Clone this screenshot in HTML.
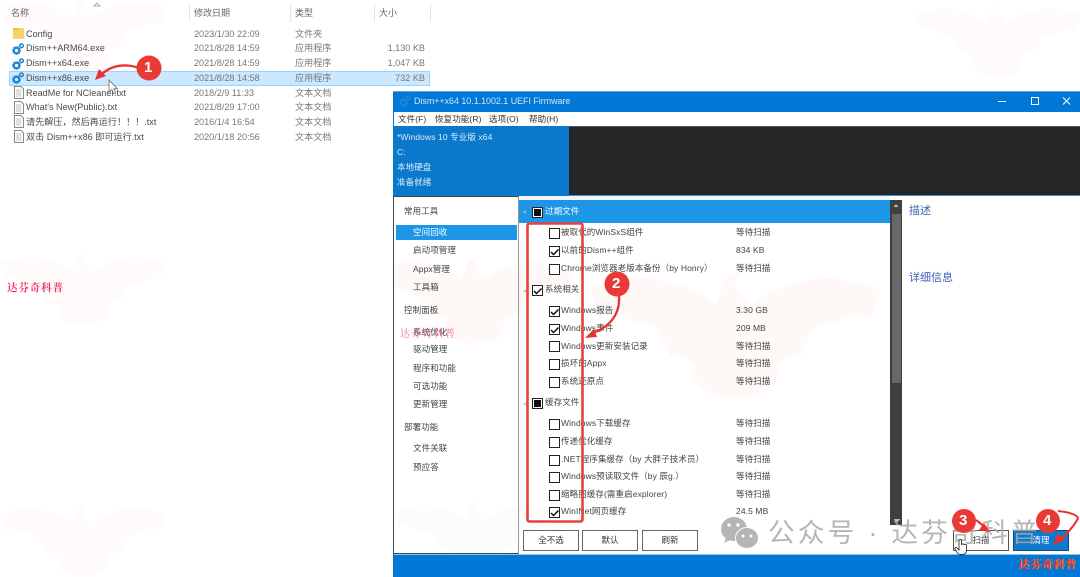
<!DOCTYPE html>
<html lang="zh"><head><meta charset="utf-8"><title>Dism++</title>
<style>
html,body{margin:0;padding:0;background:#fff}
#p{position:relative;width:1080px;height:577px;overflow:hidden;background:#fff;font-family:"Liberation Sans","Noto Sans CJK SC",sans-serif;color:#333;font-size:9px}
#p div,#p span.t{position:absolute}
.t{white-space:nowrap;line-height:14px;height:14px}
.f{color:#4a4a4a;font-size:9.1px}
.g{color:#777;font-size:9.1px}
.w{color:#fff;font-size:8.5px;letter-spacing:.1px}
.s{color:#444;font-size:8.5px;letter-spacing:.1px}
.c{width:9px;height:9px;border:1.4px solid #222;background:#fff}
.b{background:#fff;border:1px solid #666;height:19px;width:54px;line-height:19px;text-align:center;color:#333;font-size:8.5px;box-sizing:content-box}
svg{position:absolute;left:0;top:0}
</style></head><body><div id="p">

<svg width="1080" height="577" style="z-index:0">
<defs>
<g id="bat"><path d="M0 11 L28 5 Q52 6 72 20 L76 10 Q78 2 88 1 Q82 4 83 9 Q88 18 92 20 Q112 6 138 5 L166 11 L160 28 Q154 24 150 26 Q146 27 140 31 Q134 30 128 34 Q124 40 120 50 Q114 48 106 55 Q110 62 103 68 Q94 75 84 73 Q72 75 64 68 Q56 62 60 55 Q52 48 46 50 Q42 40 38 34 Q32 30 26 31 Q20 27 14 26 Q10 24 6 28Z"/></g>
<g id="gear"><circle cx="4.5" cy="7.5" r="2.7" fill="none" stroke="#1b86d8" stroke-width="2.2"/><circle cx="4.5" cy="7.5" r="4" fill="none" stroke="#1b86d8" stroke-width="1" stroke-dasharray="1.3 1.2"/><circle cx="9.5" cy="2.8" r="1.8" fill="none" stroke="#1b86d8" stroke-width="1.5"/></g>
<g id="txt"><path d="M1.5 .5H8L10.5 3V12.5H1.5Z" fill="#fff" stroke="#888"/><path d="M3 4H8.5M3 6H8.5M3 8H8.5M3 10H8.5" stroke="#aaa" stroke-width=".8"/></g>
</defs>
<g fill="#fefbfa">
<use href="#bat" x="0" y="-3"/><use href="#bat" x="0" y="252"/><use href="#bat" x="0" y="503"/><use href="#bat" x="915" y="3"/>
</g>
<rect x="13" y="28" width="11" height="11" rx="1" fill="#f8d468"/><rect x="13" y="28" width="5" height="2" fill="#e9b93f"/>
<use href="#gear" x="12" y="43"/><use href="#gear" x="12" y="58"/>
</svg>

<span class="t" style="left:11px;top:6px;color:#666;font-size:9px">名称</span>
<span class="t" style="left:194px;top:6px;color:#666;font-size:9px">修改日期</span>
<span class="t" style="left:295px;top:6px;color:#666;font-size:9px">类型</span>
<span class="t" style="left:379px;top:6px;color:#666;font-size:9px">大小</span>
<div style="left:189px;top:4px;width:1px;height:18px;background:#e5e5e5"></div>
<div style="left:290px;top:4px;width:1px;height:18px;background:#e5e5e5"></div>
<div style="left:374px;top:4px;width:1px;height:18px;background:#e5e5e5"></div>
<div style="left:430px;top:4px;width:1px;height:18px;background:#e5e5e5"></div>
<div style="left:9px;top:71px;width:421px;height:15px;background:#cce8ff;border:1px solid #99d1ff;box-sizing:border-box"></div>
<svg width="1080" height="577"><path d="M97 3l3 3h-6z" fill="none" stroke="#999" stroke-width=".8"/><use href="#gear" x="12" y="72"/><use href="#txt" x="13" y="86"/><use href="#txt" x="13" y="101"/><use href="#txt" x="13" y="115"/><use href="#txt" x="13" y="130"/></svg>

<span class="t f" style="left:26px;top:27px">Config</span><span class="t g" style="left:194px;top:27px">2023/1/30 22:09</span><span class="t g" style="left:295px;top:27px">文件夹</span>
<span class="t f" style="left:26px;top:41px">Dism++ARM64.exe</span><span class="t g" style="left:194px;top:41px">2021/8/28 14:59</span><span class="t g" style="left:295px;top:41px">应用程序</span><span class="t g" style="right:655px;top:41px">1,130 KB</span>
<span class="t f" style="left:26px;top:56px">Dism++x64.exe</span><span class="t g" style="left:194px;top:56px">2021/8/28 14:59</span><span class="t g" style="left:295px;top:56px">应用程序</span><span class="t g" style="right:655px;top:56px">1,047 KB</span>
<span class="t f" style="left:26px;top:71px">Dism++x86.exe</span><span class="t g" style="left:194px;top:71px">2021/8/28 14:58</span><span class="t g" style="left:295px;top:71px">应用程序</span><span class="t g" style="right:655px;top:71px">732 KB</span>
<span class="t f" style="left:26px;top:86px">ReadMe for NCleaner.txt</span><span class="t g" style="left:194px;top:86px">2018/2/9 11:33</span><span class="t g" style="left:295px;top:86px">文本文档</span>
<span class="t f" style="left:26px;top:100px">What's New(Public).txt</span><span class="t g" style="left:194px;top:100px">2021/8/29 17:00</span><span class="t g" style="left:295px;top:100px">文本文档</span>
<span class="t f" style="left:26px;top:115px">请先解压，然后再运行！！！.txt</span><span class="t g" style="left:194px;top:115px">2016/1/4 16:54</span><span class="t g" style="left:295px;top:115px">文本文档</span>
<span class="t f" style="left:26px;top:130px">双击 Dism++x86 即可运行.txt</span><span class="t g" style="left:194px;top:130px">2020/1/18 20:56</span><span class="t g" style="left:295px;top:130px">文本文档</span>

<span class="t" style="left:7px;top:281px;color:#f2305f;font-family:'Noto Serif CJK SC',serif;font-size:10.5px;font-weight:700;letter-spacing:.9px">达芬奇科普</span>

<!-- window -->
<div style="left:393px;top:91px;width:687px;height:486px;background:#0078d7"></div>
<div style="left:393px;top:91px;width:687px;height:1px;background:#5aa9e6"></div>
<div style="left:394px;top:112px;width:686px;height:14px;background:#fff"></div>
<div style="left:394px;top:126px;width:175px;height:70px;background:#0a78cb"></div>
<div style="left:569px;top:126px;width:511px;height:70px;background:#252525;border-top:1px solid #555;border-bottom:1px solid #3f8fca;box-sizing:border-box"></div>
<div style="left:394px;top:196px;width:686px;height:358px;background:#fff"></div>

<svg width="686" height="358" viewBox="394 196 686 358" style="left:394px;top:196px;overflow:hidden">
<g fill="#fef8f7">
<g transform="translate(375 255) scale(1.2)"><use href="#bat"/></g>
<g transform="translate(590 269) scale(1.75)"><use href="#bat"/></g>
</g>
<g fill="#fdfcfc"><use href="#bat" x="393" y="500"/></g>
</svg>

<div style="left:393px;top:196px;width:126px;height:358px;border:1px solid #3a4a55;border-right:1.5px solid #999;box-sizing:border-box"></div>
<div style="left:519px;top:196px;width:371px;height:4px;background:#f4f4f4"></div>
<div style="left:519px;top:200px;width:371px;height:23px;background:#1e96e8"></div>
<div style="left:396px;top:225px;width:121px;height:15px;background:#1e96e8"></div>
<div style="left:890px;top:200px;width:12px;height:325px;background:#3f3f42"></div>
<div style="left:891.5px;top:214px;width:9px;height:169px;background:#686868"></div>
<div style="left:394px;top:554px;width:686px;height:1px;background:#8cc4ee"></div>

<svg width="1080" height="577">
<use href="#gear" x="399" y="95"/>
<path d="M998 101.500h8" stroke="#fff" stroke-width="1"/>
<rect x="1031.500" y="97.500" width="7" height="7" fill="none" stroke="#fff"/>
<path d="M1063 97.500l7 7M1070 97.500l-7 7" stroke="#fff"/>
<path d="M523 213l3-3v3z M523 292l3-3v3z M523 405l3-3v3z" fill="#bbb"/>
<path d="M893.500 207l2.500-3 2.500 3z M893.500 519l3.500 3.500 3.500-3.500z" fill="#bbb"/>
</svg>

<span class="t" style="left:414px;top:94px;color:#cfe6f8;font-size:8.9px">Dism++x64 10.1.1002.1 UEFI Firmware</span>
<span class="t s" style="left:398px;top:112px;color:#333">文件(F)</span>
<span class="t s" style="left:435px;top:112px;color:#333">恢复功能(R)</span>
<span class="t s" style="left:489px;top:112px;color:#333">选项(O)</span>
<span class="t s" style="left:529px;top:112px;color:#333">帮助(H)</span>
<span class="t w" style="left:397px;top:130px;color:#d8ecfa">*Windows 10 专业版 x64</span>
<span class="t w" style="left:397px;top:145px;color:#d8ecfa">C:</span>
<span class="t w" style="left:397px;top:160px;color:#d8ecfa">本地硬盘</span>
<span class="t w" style="left:397px;top:175px;color:#d8ecfa">准备就绪</span>

<span class="t s" style="left:404px;top:204px">常用工具</span>
<span class="t w" style="left:413px;top:225px">空间回收</span>
<span class="t s" style="left:413px;top:243px">启动项管理</span>
<span class="t s" style="left:413px;top:262px">Appx管理</span>
<span class="t s" style="left:413px;top:280px">工具箱</span>
<span class="t s" style="left:404px;top:303px">控制面板</span>
<span class="t s" style="left:413px;top:325px">系统优化</span>
<span class="t" style="left:400px;top:326px;color:#f2467a;font-family:'Noto Serif CJK SC',serif;font-size:10px;letter-spacing:1.2px;opacity:.85">达芬奇科普</span>
<span class="t s" style="left:413px;top:342px">驱动管理</span>
<span class="t s" style="left:413px;top:361px">程序和功能</span>
<span class="t s" style="left:413px;top:379px">可选功能</span>
<span class="t s" style="left:413px;top:397px">更新管理</span>
<span class="t s" style="left:404px;top:420px">部署功能</span>
<span class="t s" style="left:413px;top:441px">文件关联</span>
<span class="t s" style="left:413px;top:460px">预应答</span>

<div class="c" style="left:532px;top:206.500px"></div><div style="left:534.400px;top:208.900px;width:7px;height:7px;background:#111"></div>
<span class="t w" style="left:545px;top:204px">过期文件</span>
<div class="c" style="left:549px;top:228px"></div><span class="t s" style="left:561px;top:225px">被取代的WinSxS组件</span><span class="t s" style="left:736px;top:225px">等待扫描</span>
<div class="c" style="left:549px;top:246px"></div><span class="t s" style="left:561px;top:243px">以前的Dism++组件</span><span class="t s" style="left:736px;top:243px">834 KB</span>
<div class="c" style="left:549px;top:264px"></div><span class="t s" style="left:561px;top:261px">Chrome浏览器老版本备份（by Honry）</span><span class="t s" style="left:736px;top:261px">等待扫描</span>
<div class="c" style="left:532px;top:285px"></div><span class="t s" style="left:545px;top:282px">系统相关</span>
<div class="c" style="left:549px;top:306px"></div><span class="t s" style="left:561px;top:303px">Windows报告</span><span class="t s" style="left:736px;top:303px">3.30 GB</span>
<div class="c" style="left:549px;top:324px"></div><span class="t s" style="left:561px;top:321px">Windows事件</span><span class="t s" style="left:736px;top:321px">209 MB</span>
<div class="c" style="left:549px;top:341px"></div><span class="t s" style="left:561px;top:339px">Windows更新安装记录</span><span class="t s" style="left:736px;top:339px">等待扫描</span>
<div class="c" style="left:549px;top:359px"></div><span class="t s" style="left:561px;top:356px">损坏的Appx</span><span class="t s" style="left:736px;top:356px">等待扫描</span>
<div class="c" style="left:549px;top:377px"></div><span class="t s" style="left:561px;top:374px">系统还原点</span><span class="t s" style="left:736px;top:374px">等待扫描</span>
<div class="c" style="left:532px;top:398px"></div><div style="left:534.400px;top:400.400px;width:7px;height:7px;background:#111"></div><span class="t s" style="left:545px;top:395px">缓存文件</span>
<div class="c" style="left:549px;top:419px"></div><span class="t s" style="left:561px;top:416px">Windows下载缓存</span><span class="t s" style="left:736px;top:416px">等待扫描</span>
<div class="c" style="left:549px;top:437px"></div><span class="t s" style="left:561px;top:434px">传递优化缓存</span><span class="t s" style="left:736px;top:434px">等待扫描</span>
<div class="c" style="left:549px;top:455px"></div><span class="t s" style="left:561px;top:452px">.NET程序集缓存（by 大胖子技术员）</span><span class="t s" style="left:736px;top:452px">等待扫描</span>
<div class="c" style="left:549px;top:472px"></div><span class="t s" style="left:561px;top:469px">Windows预读取文件（by 辰g.）</span><span class="t s" style="left:736px;top:469px">等待扫描</span>
<div class="c" style="left:549px;top:490px"></div><span class="t s" style="left:561px;top:487px">缩略图缓存(需重启explorer)</span><span class="t s" style="left:736px;top:487px">等待扫描</span>
<div class="c" style="left:549px;top:507px"></div><span class="t s" style="left:561px;top:504px">WinINet网页缓存</span><span class="t s" style="left:736px;top:504px">24.5 MB</span>

<svg width="1080" height="577">
<g fill="none" stroke="#111" stroke-width="1.5">
<path d="M551 252l2.500 2.500 5-5"/><path d="M534 291l2.500 2.500 5-5"/><path d="M551 312l2.500 2.500 5-5"/><path d="M551 330l2.500 2.500 5-5"/><path d="M551 513l2.500 2.500 5-5"/>
</g>
</svg>

<span class="t" style="left:909px;top:204px;color:#3f63b8;font-size:11px">描述</span>
<span class="t" style="left:909px;top:271px;color:#3f63b8;font-size:11px">详细信息</span>

<div class="b" style="left:523px;top:530px">全不选</div>
<div class="b" style="left:582px;top:530px">默认</div>
<div class="b" style="left:642px;top:530px">刷新</div>
<div class="b" style="left:953px;top:530px;border-color:#555">扫描</div>
<div class="b" style="left:1013px;top:530px;background:#0f78cf;border-color:#124a78;color:#fff">清理</div>

<span class="t" style="left:768px;top:515px;height:36px;line-height:36px;color:#a9a9a9;font-size:26.500px;letter-spacing:3.4px;z-index:3;opacity:.85">公众号 · 达芬奇科普</span>
<svg width="1080" height="577" style="z-index:4">
<ellipse cx="734" cy="529" rx="13" ry="12" fill="#b5b5b5"/><path d="M726 538l-2 5 6-3z" fill="#b5b5b5"/>
<ellipse cx="747" cy="538" rx="11.500" ry="10.500" fill="#b5b5b5" stroke="#fff"/>
<circle cx="729" cy="525" r="1.700" fill="#fff"/><circle cx="738" cy="525" r="1.700" fill="#fff"/><circle cx="743" cy="536" r="1.500" fill="#fff"/><circle cx="751" cy="536" r="1.500" fill="#fff"/>

<rect x="527.500" y="223.500" width="55" height="298" rx="2" fill="none" stroke="#e8403f" stroke-width="2.600"/>

<path d="M139 68Q118 61 103 73" fill="none" stroke="#e8322f" stroke-width="2.300"/><path d="M95 80l4-11 7 7z" fill="#e8322f"/>
<circle cx="149" cy="68" r="12.500" fill="#ea3a36"/>
<path d="M619 295Q621 322 593 333" fill="none" stroke="#e8322f" stroke-width="2.300"/><path d="M585 338l9-9 3 8z" fill="#e8322f"/>
<circle cx="617" cy="284" r="12.500" fill="#ea3a36"/>
<path d="M976 520L985 527" stroke="#e8322f" stroke-width="2.300"/><path d="M990 532l-11-2 5-7z" fill="#e8322f"/>
<circle cx="964" cy="521" r="12" fill="#ea3a36"/>
<path d="M1058 511Q1076 513 1078 518Q1076 524 1060 541" fill="none" stroke="#e8322f" stroke-width="2"/><path d="M1053 545l5-12 7 7z" fill="#e8322f"/>
<circle cx="1048" cy="521" r="12" fill="#ea3a36"/>

<path d="M109 80v12l2.800-2.500 2 4.500 2-.9-2-4.300h3.700z" fill="#fff" stroke="#666" stroke-width=".8"/>
<path d="M959 541c0-2 2.500-2 2.500 0v4c0-1.500 2.500-1.500 2.500 0 0-1 2.500-1 2.500.5v4.500c0 2.500-1.500 4.500-3.500 4.500h-3c-2 0-3-2-5-5.500-.7-1.500 1-2 2-1l2 2z" fill="#fff" stroke="#333" stroke-width=".9"/>
</svg>

<span class="t" style="left:144px;top:60px;z-index:5;color:#fff;font-size:15px;font-weight:700;line-height:16px;height:16px">1</span>
<span class="t" style="left:612px;top:276px;z-index:5;color:#fff;font-size:15px;font-weight:700;line-height:16px;height:16px">2</span>
<span class="t" style="left:959px;top:513px;z-index:5;color:#fff;font-size:15px;font-weight:700;line-height:16px;height:16px">3</span>
<span class="t" style="left:1043px;top:513px;z-index:5;color:#fff;font-size:15px;font-weight:700;line-height:16px;height:16px">4</span>
<span class="t" style="left:1018px;top:557px;z-index:5;color:#f2203a;font-family:'Noto Serif CJK SC',serif;font-size:11px;font-weight:700;letter-spacing:.7px;text-shadow:1px 0 0 #f7a51e">达芬奇科普</span>
</div></body></html>
